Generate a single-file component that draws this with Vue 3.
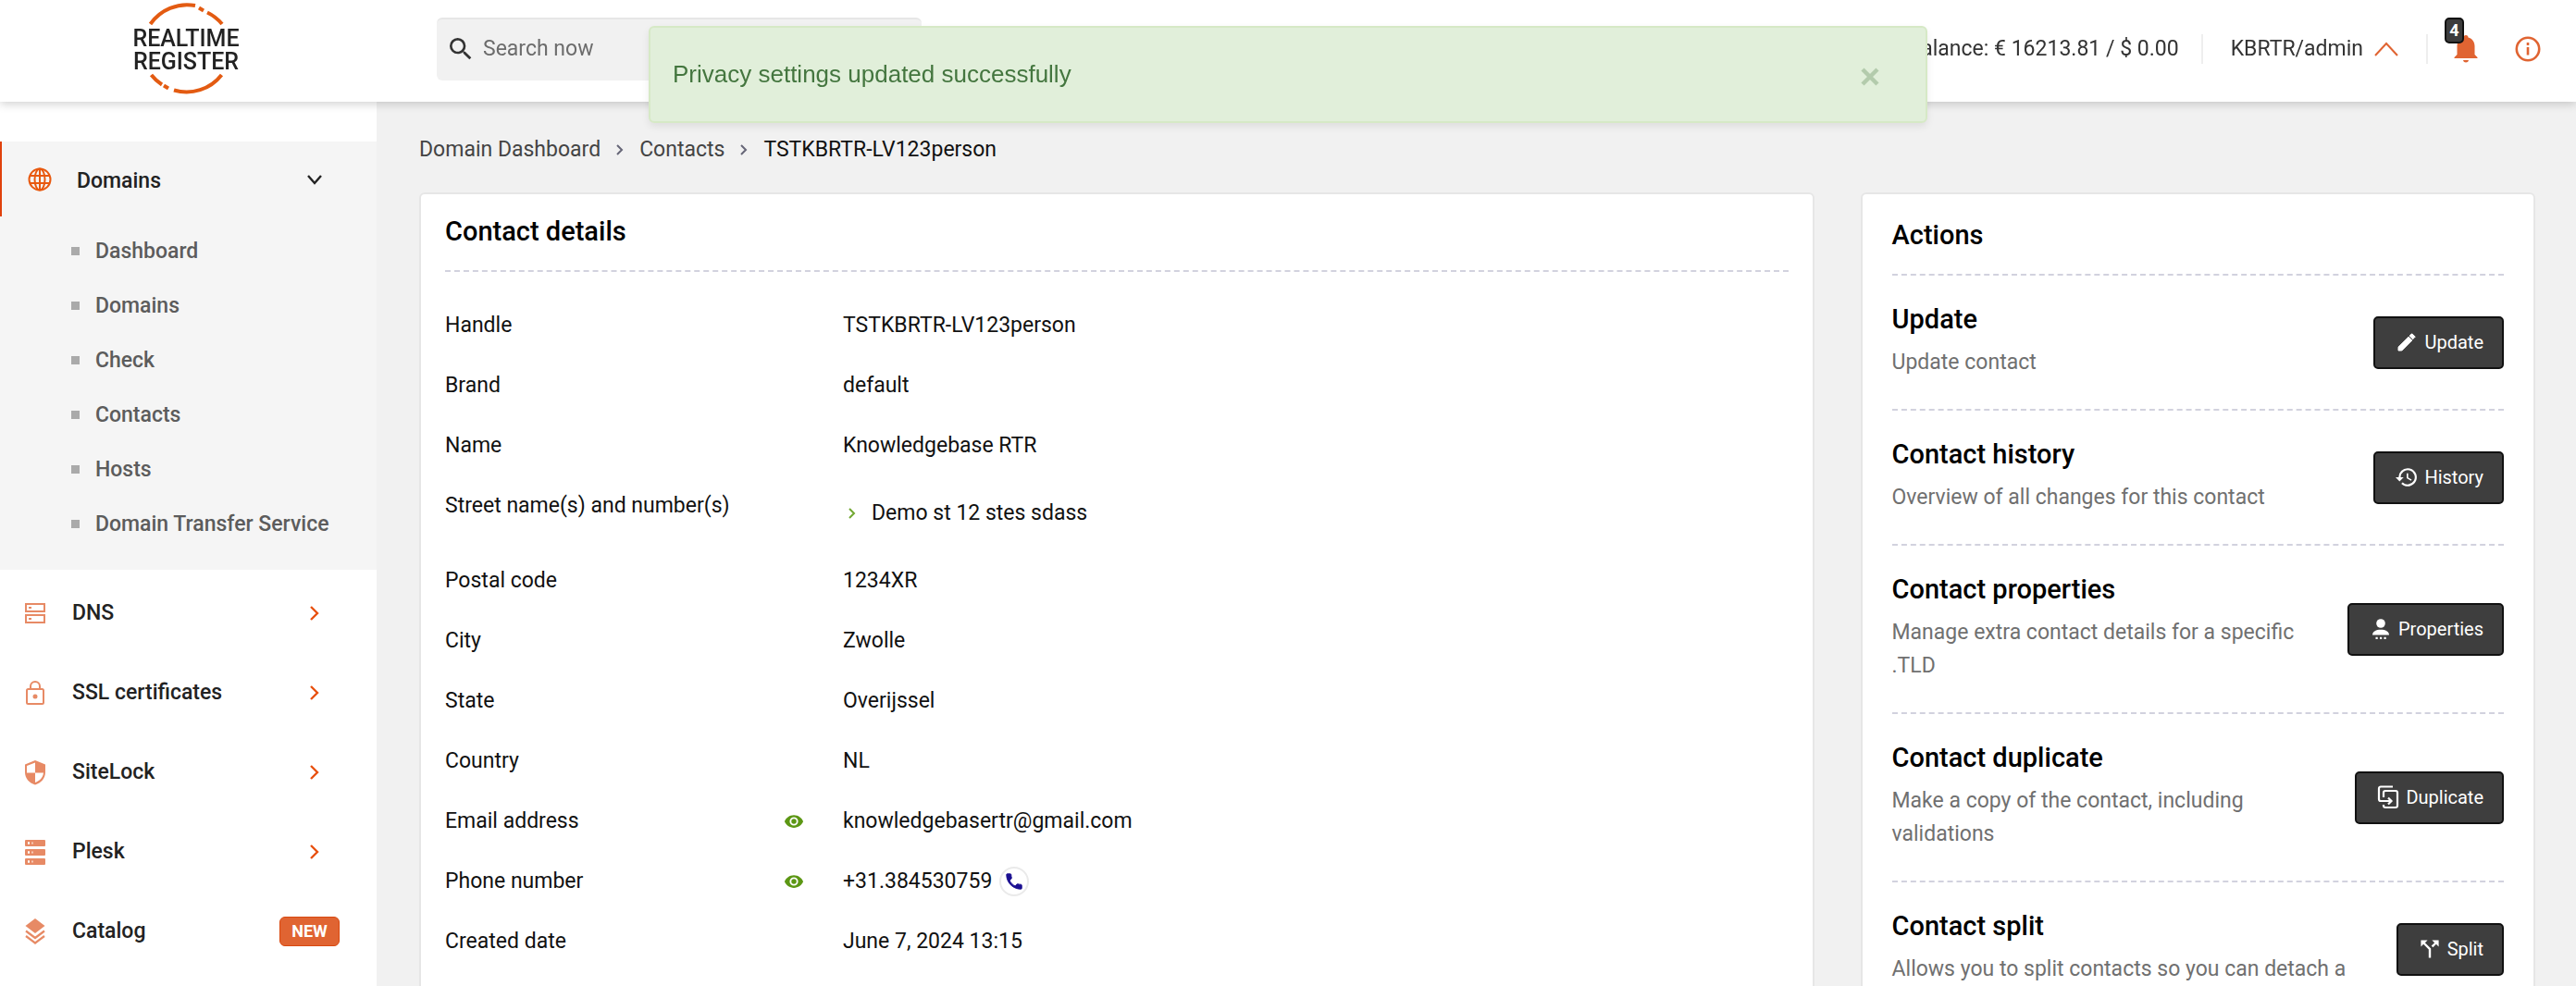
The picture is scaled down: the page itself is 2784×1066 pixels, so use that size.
<template>
  <div class="app">

    <!-- HEADER -->
    <header class="header">
      <a class="logo" href="#" aria-label="Realtime Register">
        <svg width="120" height="106" viewBox="0 0 120 106">
          <g fill="none" stroke="#e35b12" stroke-width="4">
            <path d="M20.500 26A48 48 0 0 1 69 6"/>
            <path d="M73 8.500L78 11.500"/>
            <path d="M82 13.500A48 48 0 0 1 98 26"/>
            <path d="M21.500 81A48 48 0 0 0 33 91.500"/>
            <path d="M35 92.500L40 95.500"/>
            <path d="M46 97.500A48 48 0 0 0 97.500 81"/>
          </g>
          <text x="59" y="50" text-anchor="middle" class="logo-text">REALTIME</text>
          <text x="59" y="75" text-anchor="middle" class="logo-text">REGISTER</text>
        </svg>
      </a>

      <form class="search" role="search" @submit.prevent>
        <label class="search-icon" for="search" aria-label="Search" v-html="icons.search" />
        <input id="search" v-model="query" type="text" placeholder="Search now">
      </form>

      <div class="header-right">
        <span class="balance">Balance: € 16213.81 / $ 0.00</span>
        <button class="account" type="button">
          KBRTR/admin
          <svg width="26" height="16" viewBox="0 0 26 16" fill="none" stroke="#e06432" stroke-width="2"><path d="M1 15L13 2l12 13"/></svg>
        </button>
        <button class="bell" type="button" aria-label="Notifications">
          <svg width="26" height="30" viewBox="0 0 26 30" fill="#e06432"><path d="M13 0c1.600 0 2.500 1 2.500 2.500C20 3.700 22.500 7.500 22.500 12v9l3 3V25H.5v-1l3-3v-9c0-4.500 2.500-8.300 7-9.500C10.500 1 11.400 0 13 0zM10 27h6c-.5 1.800-1.500 2.500-3 2.500S10.500 28.800 10 27z"/></svg>
          <span class="count">4</span>
        </button>
        <button class="info" type="button" aria-label="Information">
          <svg width="28" height="28" viewBox="0 0 28 28" fill="none" stroke="#e06432" stroke-width="2.600"><circle cx="14" cy="14" r="12.200"/><path d="M14 12v8.500M14 7v3"/></svg>
        </button>
      </div>
    </header>

    <!-- TOAST -->
    <div v-if="toast" class="toast" role="alert">
      <span>Privacy settings updated successfully</span>
      <button class="toast-close" type="button" aria-label="Close" @click="toast = false">
        <svg width="20" height="20" viewBox="0 0 20 20" stroke="currentColor" stroke-width="4.500"><path d="M2 2l16 16M18 2L2 18"/></svg>
      </button>
    </div>

    <div class="body">

      <!-- SIDEBAR -->
      <nav class="sidebar" aria-label="Main">
        <div class="group">
          <a class="group-head" href="#">
            <span class="nav-icon" v-html="icons.globe" />
            <span class="nav-label">Domains</span>
            <svg class="nav-arrow" width="18" height="18" viewBox="0 0 18 18" fill="none" stroke="#222" stroke-width="2.400"><path d="M2 5l7 8 7-8"/></svg>
          </a>
          <ul class="sub">
            <li v-for="s in subItems" :key="s"><a href="#">{{ s }}</a></li>
          </ul>
        </div>
        <div class="nav-list">
          <a v-for="n in navItems" :key="n.label" class="nav-item" href="#">
            <span class="nav-icon faded" v-html="n.icon" />
            <span class="nav-label">{{ n.label }}</span>
            <span v-if="n.isNew" class="badge-new">NEW</span>
            <svg v-else class="nav-arrow" width="18" height="18" viewBox="0 0 18 18" fill="none" stroke="#e8500f" stroke-width="2.400"><path d="M5 2l7 7-7 7"/></svg>
          </a>
        </div>
      </nav>

      <!-- CONTENT -->
      <main class="main">
        <nav class="crumbs" aria-label="Breadcrumb">
          <a href="#">Domain Dashboard</a>
          <svg width="10" height="14" viewBox="0 0 10 14" fill="none" stroke="#667" stroke-width="2"><path d="M2 2l5 5-5 5"/></svg>
          <a href="#">Contacts</a>
          <svg width="10" height="14" viewBox="0 0 10 14" fill="none" stroke="#667" stroke-width="2"><path d="M2 2l5 5-5 5"/></svg>
          <span class="current">TSTKBRTR-LV123person</span>
        </nav>

        <div class="columns">
          <section class="panel details">
            <h2>Contact details</h2>
            <dl>
              <div v-for="d in details" :key="d.label" class="row">
                <dt>{{ d.label }}</dt>
                <dd class="eye"><span v-if="d.visible" v-html="icons.eye" /></dd>
                <dd v-if="d.list">
                  <ul class="streets">
                    <li v-for="l in d.list" :key="l">
                      <svg width="8" height="14" viewBox="0 0 8 14" fill="none" stroke="#72a832" stroke-width="2"><path d="M1 2l5 5-5 5"/></svg>
                      {{ l }}
                    </li>
                  </ul>
                </dd>
                <dd v-else class="value">
                  {{ d.value }}
                  <a v-if="d.phone" class="call" href="#" aria-label="Call" v-html="icons.phone" />
                </dd>
              </div>
            </dl>
          </section>

          <section class="panel actions">
            <h2>Actions</h2>
            <div v-for="a in actions" :key="a.title" class="action">
              <div class="action-text">
                <h3>{{ a.title }}</h3>
                <p>{{ a.text }}</p>
              </div>
              <button class="btn" type="button">
                <span class="btn-icon" v-html="a.icon" />{{ a.button }}
              </button>
            </div>
          </section>
        </div>
      </main>
    </div>
  </div>
</template>

<script setup>
import { ref } from 'vue'

const query = ref('')
const toast = ref(true)

const icons = {
  search: `<svg width="32" height="32" viewBox="0 0 24 24" fill="#333"><path d="M15.500 14h-.79l-.28-.27A6.470 6.470 0 0 0 16 9.500 6.500 6.500 0 1 0 9.500 16c1.610 0 3.090-.59 4.230-1.570l.27.28v.79l5 4.990L20.490 19l-4.990-5zm-6 0C7.010 14 5 11.990 5 9.500S7.010 5 9.500 5 14 7.010 14 9.500 11.990 14 9.500 14z"/></svg>`,
  globe: `<svg width="26" height="26" viewBox="0 0 26 26" fill="none" stroke="#e8590f" stroke-width="2"><circle cx="13" cy="13" r="11.500"/><ellipse cx="13" cy="13" rx="5.500" ry="11.500"/><path d="M13 1.500v23M2 9h22M2 17h22"/></svg>`,
  eye: `<svg width="22" height="22" viewBox="0 0 24 24" fill="#5c9714"><path d="M12 9a3 3 0 1 0 0 6 3 3 0 0 0 0-6m0 8a5 5 0 1 1 0-10 5 5 0 0 1 0 10m0-12.500C7 4.500 2.730 7.610 1 12c1.730 4.390 6 7.500 11 7.500s9.270-3.110 11-7.500c-1.730-4.390-6-7.500-11-7.500z"/></svg>`,
  phone: `<svg width="22" height="22" viewBox="0 0 24 24" fill="#1a0f91" stroke="#1a0f91"><path d="M6.620 10.790c1.440 2.830 3.760 5.140 6.590 6.590l2.200-2.200c.27-.27.67-.36 1.020-.24 1.120.37 2.330.57 3.570.57.55 0 1 .45 1 1V20c0 .55-.45 1-1 1C10.610 21 3 13.390 3 4c0-.55.45-1 1-1h3.500c.55 0 1 .45 1 1 0 1.250.2 2.450.57 3.570.11.35.03.74-.25 1.020z"/></svg>`,
}

const subItems = ['Dashboard', 'Domains', 'Check', 'Contacts', 'Hosts', 'Domain Transfer Service']

const navItems = [
  {
    label: 'DNS',
    icon: `<svg width="22" height="22" viewBox="0 0 22 22" fill="none" stroke="#e06432" stroke-width="2"><rect x="1" y="1" width="20" height="8"/><rect x="1" y="13" width="20" height="8"/><path d="M4 5h3M4 17h3"/></svg>`
  },
  {
    label: 'SSL certificates',
    icon: `<svg width="22" height="26" viewBox="0 0 22 26" fill="none" stroke="#e06432" stroke-width="2"><rect x="2" y="9" width="18" height="16" rx="1.500"/><path d="M6 9V6a5 5 0 0 1 10 0v3"/><circle cx="11" cy="17" r="1.500" fill="#e06432"/></svg>`
  },
  {
    label: 'SiteLock',
    icon: `<svg width="22" height="27" viewBox="0 0 22 27" fill="#e06432"><path fill-rule="evenodd" d="M11 0L0 4.500V13c0 6.500 4.500 11.500 11 13.500C17.500 24.500 22 19.500 22 13V4.500zM11 2.500L2 6v7.500h9zM11 13.500V24c5-1.800 8.500-5.500 9-10.500z"/></svg>`
  },
  {
    label: 'Plesk',
    icon: `<svg width="22" height="27" viewBox="0 0 22 27" fill="#e06432"><rect y="0" width="22" height="7" rx="1"/><rect y="10" width="22" height="7" rx="1"/><rect y="20" width="22" height="7" rx="1"/><path d="M3 3.500h2M3 13.500h2M3 23.500h2" stroke="#fff" stroke-width="2.500"/><path d="M7 3.500h2M7 13.500h2M7 23.500h2" stroke="#f3b79e" stroke-width="2"/></svg>`
  },
  {
    label: 'Catalog',
    isNew: true,
    icon: `<svg width="22" height="28" viewBox="0 0 22 28" fill="#e06432"><path d="M11 0l10.500 8L11 16 .5 8z"/><path d="M1 13.500l10 7.500 10-7.500M1 19l10 7.500L21 19" fill="none" stroke="#e06432" stroke-width="2.200"/></svg>`
  },
]

const details = [
  { label: 'Handle', value: 'TSTKBRTR-LV123person' },
  { label: 'Brand', value: 'default' },
  { label: 'Name', value: 'Knowledgebase RTR' },
  { label: 'Street name(s) and number(s)', list: ['Demo st 12 stes sdass'] },
  { label: 'Postal code', value: '1234XR' },
  { label: 'City', value: 'Zwolle' },
  { label: 'State', value: 'Overijssel' },
  { label: 'Country', value: 'NL' },
  { label: 'Email address', value: 'knowledgebasertr@gmail.com', visible: true },
  { label: 'Phone number', value: '+31.384530759', visible: true, phone: true },
  { label: 'Created date', value: 'June 7, 2024 13:15' },
]

const actions = [
  {
    title: 'Update',
    text: 'Update contact',
    button: 'Update',
    icon: `<svg width="24" height="24" viewBox="0 0 24 24" fill="#fff"><path d="M20.700 7c.4-.4.4-1 0-1.400l-2.300-2.300c-.4-.4-1-.4-1.400 0l-1.900 1.800 3.800 3.800M3 17.200V21h3.800L17.800 9.900l-3.700-3.700z" stroke="#fff" stroke-linejoin="round"/></svg>`
  },
  {
    title: 'Contact history',
    text: 'Overview of all changes for this contact',
    button: 'History',
    icon: `<svg width="24" height="24" viewBox="1 1 22 22" fill="#fff"><path d="M13.500 8H12v5l4.280 2.540.72-1.210-3.500-2.080V8M13 3a9 9 0 0 0-9 9H1l3.960 4.030L9 12H6a7 7 0 1 1 2.060 4.940l-1.420 1.420A9 9 0 1 0 13 3"/></svg>`
  },
  {
    title: 'Contact properties',
    text: 'Manage extra contact details for a specific .TLD',
    button: 'Properties',
    icon: `<svg width="24" height="24" viewBox="0 0 24 24" fill="#fff"><circle cx="12" cy="6" r="4.800"/><path d="M3 18.500c0-4 4-5.800 9-5.800s9 1.800 9 5.800z"/><path d="M6.500 20.800h2.200v2.200H6.500zM11 20.800h2.200v2.200H11zM15.500 20.800h2.200v2.200h-2.200z"/></svg>`
  },
  {
    title: 'Contact duplicate',
    text: 'Make a copy of the contact, including validations',
    button: 'Duplicate',
    icon: `<svg width="24" height="26" viewBox="0 0 24 26" fill="none" stroke="#fff" stroke-width="2.200"><path d="M17 1.500H4A2 2 0 0 0 2 3.500V15a2 2 0 0 0 2 2h11"/><path d="M12 13.500l3.500 3.500-3.500 3.500"/><path d="M7 13V8a2 2 0 0 1 2-2h11a2 2 0 0 1 2 2v14a2 2 0 0 1-2 2H9a2 2 0 0 1-2-2v-1"/></svg>`
  },
  {
    title: 'Contact split',
    text: 'Allows you to split contacts so you can detach a',
    button: 'Split',
    icon: `<svg width="24" height="24" viewBox="2 2 20 20" fill="#fff"><path d="M14 4l2.290 2.290-2.880 2.880 1.420 1.420 2.880-2.880L20 10V4M10 4H4v6l2.290-2.290 4.710 4.700V20h2v-8.410l-5.290-5.300"/></svg>`
  },
]
</script>

<style>
body {
  background: #f1f1f1;
}
</style>

<style scoped>
.app {
  position: relative;
  display: flex;
  flex-direction: column;
  height: 100vh;
  overflow: hidden;
  font-family: Roboto, "Liberation Sans", sans-serif;
  font-size: 23px;
  line-height: 32px;
  color: #111;
}

.app *,
.app *::before {
  box-sizing: border-box;
}

a {
  color: inherit;
  text-decoration: none;
}

button,
input {
  font: inherit;
  color: inherit;
  background: none;
  border: 0;
  padding: 0;
}

ul,
dl,
dd,
p,
h2,
h3 {
  margin: 0;
  padding: 0;
  list-style: none;
}

.app :deep(svg) {
  display: block;
  flex-shrink: 0;
}

/* Header */
.header {
  position: relative;
  z-index: 2;
  display: flex;
  align-items: center;
  flex-shrink: 0;
  height: 110px;
  padding: 0 38px 4px 0;
  background: #fff;
  box-shadow: 0 2px 10px rgba(0, 0, 0, 0.20);
  color: #333;
}

.logo {
  display: flex;
  justify-content: center;
  width: 403px;
}

.logo-text {
  font-size: 25px;
  font-weight: 500;
  fill: #222;
}

.search {
  display: flex;
  align-items: center;
  width: 524px;
  height: 68px;
  margin-left: 69px;
  padding: 0 0 2px 10px;
  border-radius: 6px;
  border-top: 2px solid #e6e6e6;
  background: #f1f1f1;
}

.search-icon {
  margin-right: 8px;
}

.search input {
  flex: 1;
  min-width: 0;
  outline: 0;
}

.search input::placeholder {
  color: #6c6c6c;
  opacity: 1;
}

.header-right {
  display: flex;
  align-items: center;
  margin-left: auto;
  height: 34px;
}

.balance {
  padding-right: 24px;
}

.account {
  display: flex;
  align-items: center;
  gap: 12px;
  padding: 0 30px;
  border: solid #eee;
  border-width: 0 2px;
}

.bell {
  position: relative;
  margin: 0 40px 0 28px;
}

.count {
  position: absolute;
  top: -19px;
  left: -10px;
  width: 21px;
  height: 28px;
  border: 2px solid #111;
  border-radius: 5px;
  background: #3c3c3c;
  color: #fff;
  font-size: 18px;
  font-weight: 700;
  line-height: 24px;
  text-align: center;
}

/* Toast */
.toast {
  position: absolute;
  z-index: 3;
  top: 28px;
  left: 50%;
  transform: translateX(-50%);
  display: flex;
  align-items: center;
  justify-content: space-between;
  width: calc(50% - 10px);
  height: 105px;
  padding: 0 50px 2px 24px;
  border: 2px solid #d6e9c6;
  border-radius: 6px;
  background: #e1efda;
  box-shadow: 0 4px 8px rgba(0, 0, 0, 0.08);
  font-family: "Liberation Sans", Arial, sans-serif;
  font-size: 26px;
  color: #44763f;
}

.toast-close {
  padding-top: 6px;
  color: #b3cbac;
}

/* Sidebar */
.body {
  display: flex;
  flex: 1;
  min-height: 0;
}

.sidebar {
  flex-shrink: 0;
  width: 407px;
  padding-top: 43px;
  background: #fff;
  font-weight: 500;
  color: #222;
}

.group {
  padding-bottom: 20px;
  background: #f5f5f5;
}

.group-head {
  display: flex;
  align-items: center;
  height: 81px;
  padding: 0 58px 0 28px;
  border-left: 2px solid #e0410b;
}

.group-head .nav-icon {
  width: 53px;
}

.group-head .nav-label {
  padding-top: 4px;
}

.sub {
  padding-top: 8px;
}

.sub a {
  display: flex;
  align-items: center;
  height: 59px;
  padding-left: 77px;
  color: #5c5c5c;
}

.sub a::before {
  content: "";
  width: 9px;
  height: 9px;
  margin-right: 17px;
  background: #aaa;
}

.nav-list {
  padding-top: 4px;
}

.nav-item {
  display: flex;
  align-items: center;
  height: 86px;
  padding: 0 40px 0 27px;
}

.nav-item .nav-icon {
  width: 51px;
}

.nav-item .nav-arrow {
  margin-right: 18px;
}

.faded {
  opacity: 0.75;
}

.nav-label {
  flex: 1;
}

.badge-new {
  width: 65px;
  height: 32px;
  border: 1px solid #d9480f;
  border-radius: 6px;
  background: #e06432;
  color: #fff;
  font-size: 18px;
  font-weight: 700;
  line-height: 30px;
  text-align: center;
}

/* Content */
.main {
  flex: 1;
  min-width: 0;
  padding: 36px 44px 36px 46px;
  overflow-y: auto;
  scrollbar-width: none;
  background: #f1f1f1;
}

.crumbs {
  display: flex;
  align-items: center;
  gap: 16px;
  height: 32px;
  margin-bottom: 30px;
  color: #444;
}

.crumbs .current {
  color: #111;
}

.columns {
  display: grid;
  grid-template-columns: 62fr 30fr;
  gap: 50px;
}

.panel {
  border: 2px solid #e6e6e6;
  border-radius: 6px;
  background: #fff;
}

.panel h2,
.panel h3 {
  font-size: 29px;
  font-weight: 500;
  line-height: 36px;
  color: #000;
}

.panel h2 {
  padding-bottom: 24px;
  border-bottom: 2px dashed #d2d2de;
}

.details {
  padding: 22px 26px 36px;
}

.details dl {
  padding-top: 26px;
}

.row {
  display: grid;
  grid-template-columns: 366px 64px 1fr;
  padding: 16px 0 17px;
}

.eye span {
  display: flex;
  align-items: center;
  height: 32px;
}

.streets {
  padding: 8px 0;
}

.streets li {
  display: flex;
  align-items: center;
  gap: 17px;
  padding-left: 6px;
}

.value {
  display: flex;
  align-items: center;
  gap: 8px;
  height: 32px;
}

.call {
  display: grid;
  place-items: center;
  width: 32px;
  height: 32px;
  border: 2px solid #eaeaea;
  border-radius: 50%;
}

.actions {
  padding: 26px 32px 36px;
}

.action {
  display: flex;
  align-items: center;
  justify-content: space-between;
  gap: 32px;
  border-bottom: 2px dashed #d2d2de;
}

.action:last-child {
  border-bottom: 0;
}

.action-text {
  padding: 29px 0 32px;
}

.action p {
  margin-top: 11px;
  line-height: 36px;
  color: #707070;
}

.btn {
  display: flex;
  align-items: center;
  flex-shrink: 0;
  gap: 7px;
  height: 57px;
  padding: 0 20px 0 22px;
  border: 2px solid #111;
  border-radius: 5px;
  background: #3e3e3e;
  color: #fff;
  font-size: 20px;
}
</style>
